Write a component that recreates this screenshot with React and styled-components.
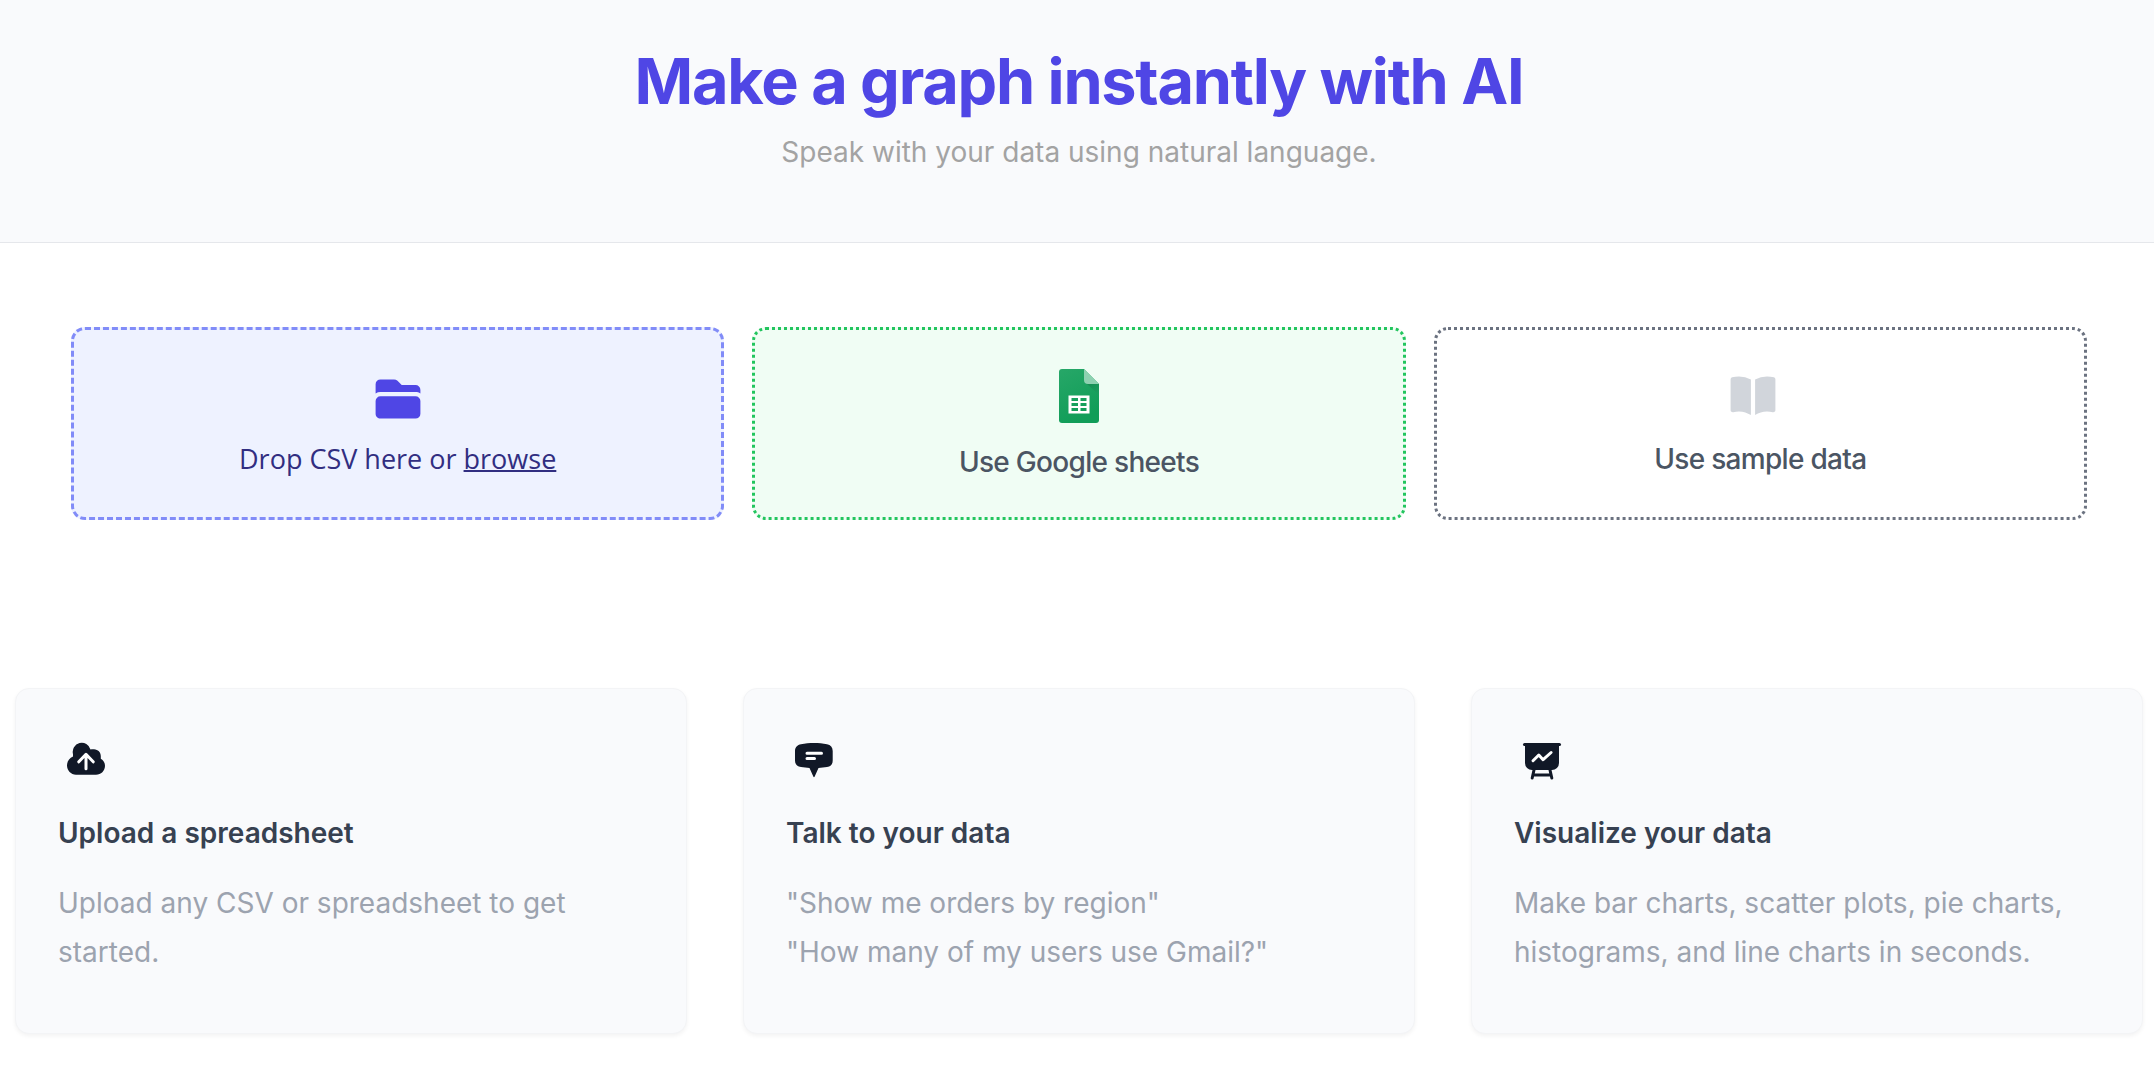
import React from "react";
import styled, { createGlobalStyle } from "styled-components";

const GlobalStyle = createGlobalStyle`
  *, *::before, *::after { box-sizing: border-box; }
  body {
    margin: 0;
    background: #ffffff;
    font-family: Inter, "Liberation Sans", sans-serif;
  }
  h1, h2, p { margin: 0; }
`;

const Hero = styled.header`
  display: flex;
  flex-direction: column;
  align-items: center;
  padding: 46px 24px 70px 28px;
  background: #f9fafc;
  border-bottom: 1px solid #e5e7eb;
  text-align: center;
`;

const HeroTitle = styled.h1`
  color: #4f46e5;
  font-size: 63px;
  font-weight: 700;
  line-height: 70px;
  letter-spacing: -0.02em;
`;

const HeroSubtitle = styled.p`
  margin-top: 16px;
  color: #a3a3a3;
  font-size: 28px;
  line-height: 40px;
`;

const Sources = styled.section`
  display: grid;
  grid-template-columns: repeat(3, minmax(0, 1fr));
  gap: 28px;
  padding: 84px 67px 0 71px;
`;

const SourceButton = styled.button`
  display: flex;
  flex-direction: column;
  align-items: center;
  justify-content: center;
  gap: ${(p) => p.$gap};
  height: 193px;
  padding: ${(p) => p.$top || "0"} 0 0;
  border: 3px ${(p) => p.$line} ${(p) => p.$border};
  border-radius: 14px;
  background: ${(p) => p.$fill};
  color: #4b5563;
  font-family: inherit;
  font-size: 28px;
  font-weight: 500;
  line-height: 42px;
  letter-spacing: -0.025em;
  cursor: pointer;

  svg { display: block; }
`;

const DropButton = styled(SourceButton)`
  color: #312e81;
  font-family: "Open Sans", "Noto Sans", sans-serif;
  font-size: 27px;
  font-weight: 400;
  letter-spacing: normal;
`;

const Browse = styled.span`
  text-decoration: underline;
  text-decoration-thickness: 2px;
`;

const BookSlot = styled.span`
  margin-right: 14px;
`;

const Features = styled.section`
  display: grid;
  grid-template-columns: repeat(3, minmax(0, 1fr));
  gap: 56px;
  padding: 168px 11px 36px 15px;
`;

const Card = styled.article`
  padding: 43px 42px 56px;
  border: 1px solid #f3f4f6;
  border-radius: 14px;
  background: #f9fafc;
  box-shadow: 0 2px 4px rgba(0, 0, 0, 0.05);
`;

const CardIcon = styled.div`
  width: 56px;
  height: 56px;
  padding: 7px;
  color: #111827;

  svg { display: block; }
`;

const CardTitle = styled.h2`
  margin-top: 24px;
  color: #374151;
  font-size: 28px;
  font-weight: 600;
  line-height: 42px;
`;

const CardText = styled.p`
  margin-top: 25px;
  color: #9ca3af;
  font-size: 28px;
  line-height: 49px;
`;

const FolderIcon = () => (
  <svg width="56" height="56" viewBox="0 0 20 20" fill="#4f46e5" aria-hidden="true">
    <path d="M3.75 3A1.75 1.75 0 0 0 2 4.75v3.26a3.235 3.235 0 0 1 1.75-.51h12.5c.644 0 1.245.188 1.75.51V6.75A1.75 1.75 0 0 0 16.25 5h-4.836a.25.25 0 0 1-.177-.073L9.823 3.513A1.75 1.75 0 0 0 8.586 3H3.75ZM3.75 9A1.75 1.75 0 0 0 2 10.75v4.5c0 .966.784 1.75 1.75 1.75h12.5A1.75 1.75 0 0 0 18 15.25v-4.5A1.75 1.75 0 0 0 16.25 9H3.75Z" />
  </svg>
);

const BookIcon = () => (
  <svg width="56" height="56" viewBox="0 0 20 20" fill="#d1d5db" aria-hidden="true">
    <path d="M10.75 16.82A7.462 7.462 0 0 1 15 15.5c.71 0 1.396.098 2.046.282A.75.75 0 0 0 18 15.06v-11a.75.75 0 0 0-.546-.721A9.006 9.006 0 0 0 15 3a8.963 8.963 0 0 0-4.25 1.065V16.82ZM9.25 4.065A8.963 8.963 0 0 0 5 3c-.85 0-1.673.118-2.454.339A.75.75 0 0 0 2 4.06v11a.75.75 0 0 0 .954.721A7.506 7.506 0 0 1 5 15.5c1.579 0 3.042.487 4.25 1.32V4.065Z" />
  </svg>
);

const SheetsIcon = () => (
  <svg width="42" height="56" viewBox="0 0 42 56" aria-hidden="true">
    <defs>
      <linearGradient id="sheet" x1="0" y1="0" x2="0.4" y2="1">
        <stop offset="0" stopColor="#27a768" />
        <stop offset="1" stopColor="#109d58" />
      </linearGradient>
      <linearGradient id="fold" x1="0" y1="0" x2="1" y2="1">
        <stop offset="0" stopColor="#178a52" />
        <stop offset="1" stopColor="#1aa05f" />
      </linearGradient>
    </defs>
    <path d="M4 1h22l15 15v36a3 3 0 0 1-3 3H4a3 3 0 0 1-3-3V4a3 3 0 0 1 3-3Z" fill="url(#sheet)" />
    <path d="m28 15 13 12V16Z" fill="url(#fold)" />
    <path d="M26 1v11a4 4 0 0 0 4 4h11Z" fill="#8ed1b1" />
    <path fillRule="evenodd" d="M10.500 27.500h21v18h-21ZM13.500 30v3h6.500v-3ZM22.500 30v3h6v-3ZM13.500 35v3h6.500v-3ZM22.500 35v3h6v-3ZM13.500 40v3h6.500v-3ZM22.500 40v3h6v-3Z" fill="#ffffff" />
  </svg>
);

const GlyphSvg = ({ children }) => (
  <svg width="42" height="42" viewBox="0 0 42 42" fill="none" strokeWidth="3" strokeLinecap="round" strokeLinejoin="round" aria-hidden="true">
    {children}
  </svg>
);

const CloudUploadIcon = () => (
  <GlyphSvg>
    <path d="M11 35.700C6 35.700 2 31.500 2 26.500c0-4 2.400-7.400 6-9V15A9 9 0 0 1 25.500 10.500C26.500 10.200 28 10.100 29 10.200c4 .3 6.800 3 6.800 7v2.500c2.600 1.700 4.200 4.100 4.200 7 0 5-4 9-9 9Z" fill="currentColor" />
    <path d="M21 29.800V15.500M13.800 22.800 21 15.300l7.200 7.500" stroke="#ffffff" />
  </GlyphSvg>
);

const ChatIcon = () => (
  <GlyphSvg>
    <path d="M8 5.300C16 3.600 26 3.600 34 5.300c3.700.7 5.700 3 5.700 6.700v9.500c0 3.700-2 6-5.700 6.600-2.600.4-5.800.6-8.500.8L21.700 37.500q-.7 1.500-1.400 0L16.500 28.900c-2.700-.2-5.900-.4-8.500-.8C4.300 27.500 2 25.200 2 21.500V12c0-3.700 2.300-6 6-6.700Z" fill="currentColor" />
    <path d="M14 14.200h14.500M14 19.500h7.500" stroke="#ffffff" />
  </GlyphSvg>
);

const BoardIcon = () => (
  <GlyphSvg>
    <path d="M4 6h34v18a7 7 0 0 1-7 7H11a7 7 0 0 1-7-7Z" fill="currentColor" />
    <path d="M3.500 5.500h35" stroke="currentColor" />
    <path d="m13 31-1.800 8M29 31l1.800 8M12 36h18" stroke="currentColor" />
    <path d="m12 21.700 5.800-5.700 4.300 4.700 8-7.200" stroke="#ffffff" />
  </GlyphSvg>
);

const features = [
  { icon: CloudUploadIcon, title: "Upload a spreadsheet", lines: ["Upload any CSV or spreadsheet to get started."] },
  { icon: ChatIcon, title: "Talk to your data", lines: ['"Show me orders by region"', '"How many of my users use Gmail?"'] },
  { icon: BoardIcon, title: "Visualize your data", lines: ["Make bar charts, scatter plots, pie charts, histograms, and line charts in seconds."] },
];

export default function App() {
  return (
    <>
      <GlobalStyle />
      <Hero>
        <HeroTitle>Make a graph instantly with AI</HeroTitle>
        <HeroSubtitle>Speak with your data using natural language.</HeroSubtitle>
      </Hero>
      <main>
        <Sources>
          <DropButton type="button" $line="dashed" $border="#818cf8" $fill="#eef2ff" $gap="11px" $top="3px">
            <FolderIcon />
            <span>Drop CSV here or <Browse>browse</Browse></span>
          </DropButton>
          <SourceButton type="button" $line="dotted" $border="#22c55e" $fill="#f0fdf4" $gap="17px" $top="3px">
            <SheetsIcon />
            <span>Use Google sheets</span>
          </SourceButton>
          <SourceButton type="button" $line="dotted" $border="#6b7280" $fill="#ffffff" $gap="14px">
            <BookSlot><BookIcon /></BookSlot>
            <span>Use sample data</span>
          </SourceButton>
        </Sources>
        <Features>
          {features.map(({ icon: Icon, title, lines }) => (
            <Card key={title}>
              <CardIcon><Icon /></CardIcon>
              <CardTitle>{title}</CardTitle>
              <CardText>
                {lines.map((line, i) => (
                  <React.Fragment key={line}>
                    {i > 0 && <br />}
                    {line}
                  </React.Fragment>
                ))}
              </CardText>
            </Card>
          ))}
        </Features>
      </main>
    </>
  );
}
